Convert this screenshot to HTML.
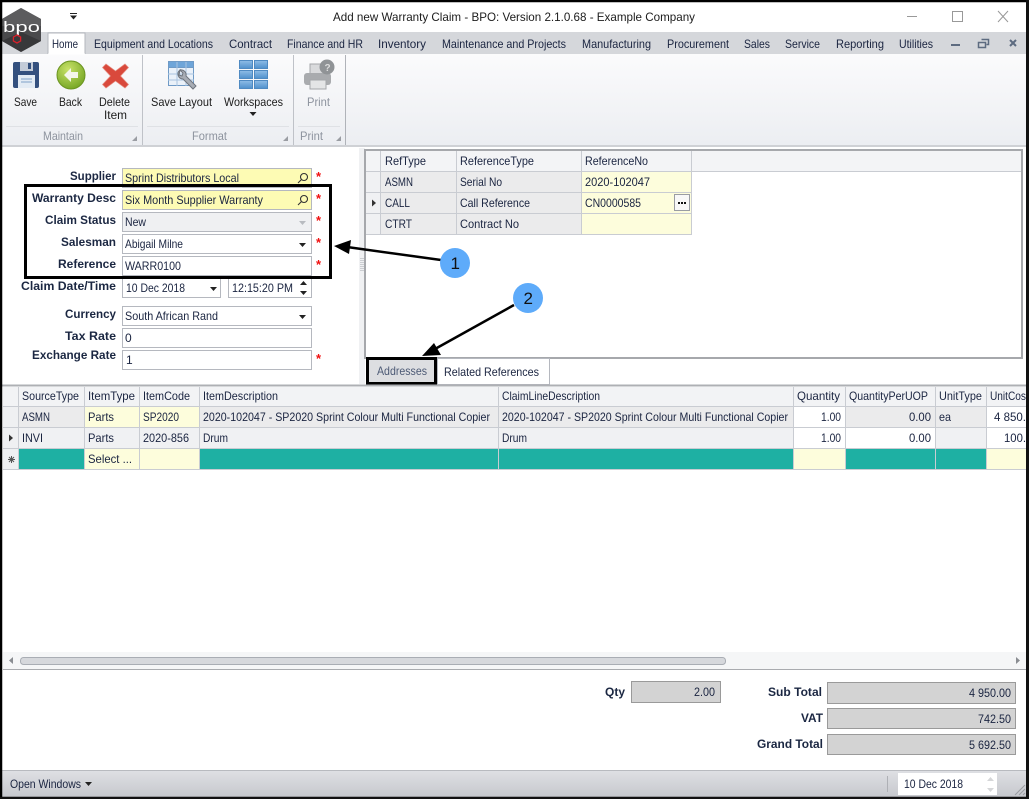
<!DOCTYPE html>
<html><head><meta charset="utf-8"><title>Add new Warranty Claim</title>
<style>
html,body{margin:0;padding:0;background:#fff;width:1029px;height:799px;overflow:hidden}
svg{display:block}
text{font-family:"Liberation Sans",sans-serif;font-size:12px;fill:#1a2440}
.b{font-weight:bold;fill:#1b2742}
.g{fill:#8d939e}
.d{fill:#1c1c1c}
.f{fill:#fff;stroke:#b5b8bf}
.y{fill:#fdfbb4;stroke:#b5b8bf}
.r{fill:#f01010;font-weight:bold;font-size:13px}
</style></head><body>
<svg width="1029" height="799" viewBox="0 0 1029 799" xmlns="http://www.w3.org/2000/svg">
<defs>
<linearGradient id="rib" x1="0" y1="0" x2="0" y2="1"><stop offset="0" stop-color="#fbfbfc"/><stop offset="1" stop-color="#eceef2"/></linearGradient>
<linearGradient id="st" x1="0" y1="0" x2="0" y2="1"><stop offset="0" stop-color="#dfe0e4"/><stop offset="1" stop-color="#c6c8cd"/></linearGradient>
<linearGradient id="blue" x1="0" y1="0" x2="0" y2="1"><stop offset="0" stop-color="#8fbde6"/><stop offset="1" stop-color="#4f90cc"/></linearGradient>
<radialGradient id="green" cx=".4" cy=".3" r=".8"><stop offset="0" stop-color="#c8e268"/><stop offset="1" stop-color="#6ea01e"/></radialGradient>
</defs>
<rect width="1029" height="799" fill="#fff"/>

<!-- title bar -->
<text x="333" y="21" textLength="362" lengthAdjust="spacingAndGlyphs" class="d">Add new Warranty Claim - BPO: Version 2.1.0.68 - Example Company</text>
<path d="M907 16.500h10" stroke="#999" fill="none"/>
<rect x="952.500" y="11.500" width="10" height="10" fill="none" stroke="#999"/>
<path d="M998 11l10 11M1008 11l-10 11" stroke="#999" fill="none"/>
<path d="M70 13h7v1h-7zM70 15.500h7l-3.500 4z" fill="#222"/>

<!-- tab strip -->
<rect x="2" y="32" width="1024" height="22" fill="#d5d7db"/>
<path d="M48 54V33h37v21z" fill="#fff" stroke="#b4b7bd"/>
<g>
<text x="52" y="48" textLength="26" lengthAdjust="spacingAndGlyphs">Home</text>
<text x="94" y="48" textLength="119" lengthAdjust="spacingAndGlyphs">Equipment and Locations</text>
<text x="229" y="48" textLength="43" lengthAdjust="spacingAndGlyphs">Contract</text>
<text x="287" y="48" textLength="76" lengthAdjust="spacingAndGlyphs">Finance and HR</text>
<text x="378" y="48" textLength="48" lengthAdjust="spacingAndGlyphs">Inventory</text>
<text x="442" y="48" textLength="124" lengthAdjust="spacingAndGlyphs">Maintenance and Projects</text>
<text x="582" y="48" textLength="69" lengthAdjust="spacingAndGlyphs">Manufacturing</text>
<text x="667" y="48" textLength="62" lengthAdjust="spacingAndGlyphs">Procurement</text>
<text x="744" y="48" textLength="26" lengthAdjust="spacingAndGlyphs">Sales</text>
<text x="785" y="48" textLength="35" lengthAdjust="spacingAndGlyphs">Service</text>
<text x="836" y="48" textLength="48" lengthAdjust="spacingAndGlyphs">Reporting</text>
<text x="899" y="48" textLength="34" lengthAdjust="spacingAndGlyphs">Utilities</text>
</g>
<path d="M951 44h9v2h-9z" fill="#5d6b80"/>
<path d="M981.500 39.500h7v5h-2M978.500 42.500h7v5h-7z" fill="none" stroke="#5d6b80" stroke-width="1.500"/>
<path d="M1010 40l6 6M1016 40l-6 6" stroke="#5d6b80" stroke-width="2"/>

<!-- ribbon -->
<rect x="2" y="54" width="1024" height="91" fill="url(#rib)"/>
<rect x="2" y="145" width="1024" height="2" fill="#cfd1d5"/>
<path d="M48 54h37" stroke="#fff"/>
<path d="M142.500 55v90M293.500 55v90" stroke="#bfc2c8"/>
<path d="M345.500 55v90" stroke="#b0b3b9"/>
<path d="M6 126.500h132M147 126.500h142M298 126.500h42" stroke="#dfe1e5"/>
<path d="M137 136v5h-5zM288 136v5h-5zM341 136v5h-5z" fill="#9a9da3"/>

<!-- logo -->
<path d="M21 8L41 19V41L21 52L2 41V19Z" fill="#4a4a4c"/>
<path d="M21 8L41 19V26H2V19Z" fill="#5c5c5e"/>
<path d="M21 32L41 41L21 52L2 41Z" fill="#38383a"/>
<text x="3" y="32" textLength="37" lengthAdjust="spacingAndGlyphs" style="font-size:15px;fill:#fff">bpo</text>
<path d="M17 35l3.600 2v4l-3.600 2-3.600-2v-4z" fill="none" stroke="#d8202a" stroke-width="1.300"/>

<!-- Save -->
<rect x="13" y="62" width="26" height="26" rx="2" fill="#34507e"/>
<rect x="20" y="62" width="13" height="9" fill="#c4ccd8"/><rect x="28" y="63" width="3" height="6" fill="#34507e"/>
<rect x="18" y="75" width="17" height="13" fill="#e3ebf4"/><path d="M21 79h11M21 82h11" stroke="#7fa2c8"/>
<!-- Back -->
<circle cx="71" cy="75" r="14" fill="url(#green)" stroke="#6b9420"/>
<path d="M64 75l7-7v4h7v6h-7v4z" fill="#f4f6ea"/>
<!-- Delete -->
<path d="M106 64l9.500 7 9.500-7 3.500 3.500-8 8.500 8 8.500-3.500 3.500-9.500-7-9.500 7-3.500-3.500 8-8.500-8-8.500z" fill="#d9493c" stroke="#e58b7f" stroke-width=".7"/>
<!-- Save layout -->
<rect x="168.500" y="61.500" width="25" height="24" fill="#eaf1f9" stroke="#6f9ac6"/>
<rect x="168.500" y="61.500" width="25" height="6" fill="#6ea5d9" stroke="#6f9ac6"/>
<path d="M168 74h26M168 80h26M177 62v24M186 62v24" stroke="#a9c4e0"/>
<path d="M180 70a5 5 0 0 0 3 9l10 10 3-3-10-10a5 5 0 0 0-6-6l3 3-1 3-3-1z" fill="#a8adb5" stroke="#6e747d"/>
<!-- Workspaces -->
<g fill="url(#blue)" stroke="#4f8ac2">
<rect x="239.500" y="60.500" width="13" height="8"/><rect x="254.500" y="60.500" width="13" height="8"/>
<rect x="239.500" y="70.500" width="13" height="8"/><rect x="254.500" y="70.500" width="13" height="8"/>
<rect x="239.500" y="80.500" width="13" height="8"/><rect x="254.500" y="80.500" width="13" height="8"/>
</g>
<!-- Print -->
<rect x="310" y="64" width="17" height="10" fill="#d9dadc" stroke="#a5a7aa"/>
<rect x="304" y="73" width="27" height="12" rx="3" fill="#a9abae"/>
<rect x="310" y="80" width="16" height="9" fill="#e4e5e6" stroke="#a5a7aa"/>
<circle cx="327" cy="67" r="7.500" fill="#909396"/>
<text x="324.500" y="71" style="font-size:10px;font-weight:bold;fill:#dcdcdc">?</text>

<g>
<text x="14" y="106" textLength="23" lengthAdjust="spacingAndGlyphs" class="d">Save</text>
<text x="59" y="106" textLength="23" lengthAdjust="spacingAndGlyphs" class="d">Back</text>
<text x="99" y="106" textLength="31" lengthAdjust="spacingAndGlyphs" class="d">Delete</text>
<text x="104" y="119" textLength="23" lengthAdjust="spacingAndGlyphs" class="d">Item</text>
<text x="151" y="106" textLength="61" lengthAdjust="spacingAndGlyphs" class="d">Save Layout</text>
<text x="224" y="106" textLength="59" lengthAdjust="spacingAndGlyphs" class="d">Workspaces</text>
<text x="307" y="106" textLength="23" lengthAdjust="spacingAndGlyphs" class="g">Print</text>
<text x="43" y="140" textLength="40" lengthAdjust="spacingAndGlyphs" class="g">Maintain</text>
<text x="192" y="140" textLength="35" lengthAdjust="spacingAndGlyphs" class="g">Format</text>
<text x="300" y="140" textLength="23" lengthAdjust="spacingAndGlyphs" class="g">Print</text>
</g>
<path d="M249.500 112h7l-3.500 4z" fill="#222"/>

<!-- form fields -->
<rect class="y" x="122.500" y="168.500" width="189" height="19"/>
<rect class="y" x="122.500" y="190.500" width="189" height="19"/>
<rect x="122.500" y="212.500" width="189" height="19" fill="#eff0f2" stroke="#b5b8bf"/>
<rect class="f" x="122.500" y="234.500" width="189" height="19"/>
<rect class="f" x="122.500" y="256.500" width="189" height="19"/>
<rect class="f" x="122.500" y="278.500" width="98" height="19"/>
<rect class="f" x="228.500" y="278.500" width="83" height="19"/>
<rect class="f" x="122.500" y="306.500" width="189" height="19"/>
<rect class="f" x="122.500" y="328.500" width="189" height="19"/>
<rect class="f" x="122.500" y="350.500" width="189" height="19"/>

<g>
<text class="b" x="70" y="180" textLength="46" lengthAdjust="spacingAndGlyphs">Supplier</text>
<text class="b" x="32" y="202" textLength="84" lengthAdjust="spacingAndGlyphs">Warranty Desc</text>
<text class="b" x="45" y="224" textLength="71" lengthAdjust="spacingAndGlyphs">Claim Status</text>
<text class="b" x="61" y="246" textLength="55" lengthAdjust="spacingAndGlyphs">Salesman</text>
<text class="b" x="58" y="268" textLength="58" lengthAdjust="spacingAndGlyphs">Reference</text>
<text class="b" x="21" y="290" textLength="95" lengthAdjust="spacingAndGlyphs">Claim Date/Time</text>
<text class="b" x="65" y="318" textLength="51" lengthAdjust="spacingAndGlyphs">Currency</text>
<text class="b" x="65" y="340" textLength="51" lengthAdjust="spacingAndGlyphs">Tax Rate</text>
<text class="b" x="32" y="359" textLength="84" lengthAdjust="spacingAndGlyphs">Exchange Rate</text>

<text x="125" y="182" textLength="114" lengthAdjust="spacingAndGlyphs">Sprint Distributors Local</text>
<text x="125" y="204" textLength="138" lengthAdjust="spacingAndGlyphs">Six Month Supplier Warranty</text>
<text x="125" y="226" textLength="21" lengthAdjust="spacingAndGlyphs">New</text>
<text x="125" y="248" textLength="58" lengthAdjust="spacingAndGlyphs">Abigail Milne</text>
<text x="125" y="270" textLength="56" lengthAdjust="spacingAndGlyphs">WARR0100</text>
<text x="126" y="292" textLength="59" lengthAdjust="spacingAndGlyphs">10 Dec 2018</text>
<text x="232" y="292" textLength="61" lengthAdjust="spacingAndGlyphs">12:15:20 PM</text>
<text x="125" y="320" textLength="93" lengthAdjust="spacingAndGlyphs">South African Rand</text>
<text x="125" y="342">0</text>
<text x="126" y="364">1</text>
</g>
<g fill="none" stroke="#333" stroke-width="1.100">
<circle cx="304" cy="177" r="3.500"/><path d="M301.500 179.500l-3.500 3.500"/>
<circle cx="304" cy="199" r="3.500"/><path d="M301.500 201.500l-3.500 3.500"/>
</g>
<path d="M299 221h7l-3.500 4z" fill="#b8bbc0"/>
<path d="M299 243h7l-3.500 4zM299 315h7l-3.500 4zM210 287h7l-3.500 4z" fill="#222"/>
<path d="M300 285l3.500-4 3.500 4zM300 291h7l-3.500 4z" fill="#222"/>
<text class="r" x="316" y="181">*</text>
<text class="r" x="316" y="203">*</text>
<text class="r" x="316" y="225">*</text>
<text class="r" x="316" y="247">*</text>
<text class="r" x="316" y="269">*</text>
<text class="r" x="316" y="363">*</text>
<rect x="25.500" y="185.500" width="305" height="92" fill="none" stroke="#000" stroke-width="3"/>

<!-- splitter -->
<rect x="359" y="148" width="6" height="236" fill="#f0f1f3"/>
<path d="M361 258v14M363 258v14" stroke="#a8abb0" stroke-dasharray="1 1"/>

<!-- ref grid -->
<rect x="365" y="150" width="657" height="208" fill="#fff" stroke="#a6a8ac" stroke-width="2"/>
<rect x="366" y="151" width="655" height="20" fill="#f3f4f6"/>
<path d="M366 171.500h655" stroke="#c9ccd2"/>
<rect x="366" y="172" width="14" height="62" fill="#f0f1f3"/>
<rect x="381" y="172" width="200" height="62" fill="#ebebec"/>
<rect x="582" y="172" width="109" height="62" fill="#fdfddc"/>
<path d="M366 192.500h325M366 213.500h325M366 234.500h325M380.500 151v84M456.500 151v84M581.500 151v84M691.500 151v84" stroke="#c9ccd2"/>
<g>
<text x="385" y="165" textLength="41" lengthAdjust="spacingAndGlyphs">RefType</text>
<text x="460" y="165" textLength="74" lengthAdjust="spacingAndGlyphs">ReferenceType</text>
<text x="585" y="165" textLength="63" lengthAdjust="spacingAndGlyphs">ReferenceNo</text>
<text x="385" y="186" textLength="28" lengthAdjust="spacingAndGlyphs">ASMN</text>
<text x="460" y="186" textLength="42" lengthAdjust="spacingAndGlyphs">Serial No</text>
<text x="585" y="186" textLength="65" lengthAdjust="spacingAndGlyphs">2020-102047</text>
<text x="385" y="207" textLength="25" lengthAdjust="spacingAndGlyphs">CALL</text>
<text x="460" y="207" textLength="70" lengthAdjust="spacingAndGlyphs">Call Reference</text>
<text x="585" y="207" textLength="56" lengthAdjust="spacingAndGlyphs">CN0000585</text>
<text x="385" y="228" textLength="27" lengthAdjust="spacingAndGlyphs">CTRT</text>
<text x="460" y="228" textLength="59" lengthAdjust="spacingAndGlyphs">Contract No</text>
</g>
<path d="M372 199.500l4 3.500-4 3.500z" fill="#333"/>
<rect x="674.500" y="194.500" width="15" height="16" fill="#f8f8f8" stroke="#9a9da3"/>
<path d="M678 203h2M681 203h2M684 203h2" stroke="#111" stroke-width="2"/>

<!-- tabs -->
<rect x="437.500" y="358.500" width="112" height="26" fill="#fff" stroke="#b5b8bf"/>
<rect x="367.500" y="358.500" width="68" height="25" fill="#dddee1" stroke="#000" stroke-width="3"/>
<text x="377" y="375" textLength="50" lengthAdjust="spacingAndGlyphs" style="fill:#4d5a75">Addresses</text>
<text x="444" y="376" textLength="95" lengthAdjust="spacingAndGlyphs">Related References</text>

<!-- arrows and callouts -->
<path d="M441 260L347 247" stroke="#000" stroke-width="2.500" fill="none"/>
<path d="M334 246L351 240L349 254Z" fill="#000"/>
<path d="M514 305L435 349" stroke="#000" stroke-width="2.500" fill="none"/>
<path d="M422 356L434 343L441 355Z" fill="#000"/>
<circle cx="455" cy="263" r="15" fill="#5eabfa"/>
<circle cx="528" cy="298" r="15" fill="#5eabfa"/>
<text x="450.500" y="269" style="font-size:17px;fill:#111">1</text>
<text x="523.500" y="304" style="font-size:17px;fill:#111">2</text>

<!-- lines grid -->
<path d="M2 385.500h1024" stroke="#aeb0b4" stroke-width="2"/>
<rect x="3" y="387" width="1023" height="19" fill="#f2f3f5"/>
<rect x="3" y="407" width="16" height="62" fill="#eff0f2"/>
<rect x="19" y="407" width="66" height="20" fill="#ebebec"/>
<rect x="85" y="407" width="114" height="20" fill="#fdfddc"/>
<rect x="200" y="407" width="594" height="20" fill="#ebebec"/>
<rect x="846" y="407" width="140" height="20" fill="#ebebec"/>
<rect x="19" y="428" width="180" height="20" fill="#f0f1f3"/>
<rect x="200" y="428" width="594" height="20" fill="#f0f1f3"/>
<rect x="936" y="428" width="50" height="20" fill="#f0f1f3"/>
<rect x="19" y="449" width="1007" height="20" fill="#1eb0a3"/>
<rect x="85" y="449" width="114" height="20" fill="#fdfddc"/>
<rect x="794" y="449" width="51" height="20" fill="#fdfddc"/>
<rect x="987" y="449" width="39" height="20" fill="#fdfddc"/>
<rect x="987" y="407" width="39" height="20" fill="#fff"/>
<path d="M3 406.500h1023M3 427.500h1023M3 448.500h1023M3 469.500h1023" stroke="#c9ccd2"/>
<path d="M18.500 387v83M84.500 387v83M139.500 387v83M199.500 387v83M498.500 387v83M793.500 387v83M845.500 387v83M935.500 387v83M986.500 387v83" stroke="#c9ccd2"/>
<g>
<text x="22" y="400" textLength="57" lengthAdjust="spacingAndGlyphs">SourceType</text>
<text x="88" y="400" textLength="47" lengthAdjust="spacingAndGlyphs">ItemType</text>
<text x="143" y="400" textLength="47" lengthAdjust="spacingAndGlyphs">ItemCode</text>
<text x="203" y="400" textLength="75" lengthAdjust="spacingAndGlyphs">ItemDescription</text>
<text x="502" y="400" textLength="98" lengthAdjust="spacingAndGlyphs">ClaimLineDescription</text>
<text x="797" y="400" textLength="43" lengthAdjust="spacingAndGlyphs">Quantity</text>
<text x="849" y="400" textLength="79" lengthAdjust="spacingAndGlyphs">QuantityPerUOP</text>
<text x="939" y="400" textLength="43" lengthAdjust="spacingAndGlyphs">UnitType</text>
<text x="990" y="400" textLength="36" lengthAdjust="spacingAndGlyphs">UnitCos</text>

<text x="22" y="421" textLength="28" lengthAdjust="spacingAndGlyphs">ASMN</text>
<text x="88" y="421" textLength="26" lengthAdjust="spacingAndGlyphs">Parts</text>
<text x="143" y="421" textLength="36" lengthAdjust="spacingAndGlyphs">SP2020</text>
<text x="203" y="421" textLength="287" lengthAdjust="spacingAndGlyphs">2020-102047 - SP2020 Sprint Colour Multi Functional Copier</text>
<text x="502" y="421" textLength="286" lengthAdjust="spacingAndGlyphs">2020-102047 - SP2020 Sprint Colour Multi Functional Copier</text>
<text x="821" y="421" textLength="20" lengthAdjust="spacingAndGlyphs">1.00</text>
<text x="909" y="421" textLength="22" lengthAdjust="spacingAndGlyphs">0.00</text>
<text x="939" y="421" textLength="12" lengthAdjust="spacingAndGlyphs">ea</text>
<text x="994" y="421" textLength="32" lengthAdjust="spacingAndGlyphs">4 850.</text>

<text x="22" y="442" textLength="21" lengthAdjust="spacingAndGlyphs">INVI</text>
<text x="88" y="442" textLength="26" lengthAdjust="spacingAndGlyphs">Parts</text>
<text x="143" y="442" textLength="46" lengthAdjust="spacingAndGlyphs">2020-856</text>
<text x="203" y="442" textLength="25" lengthAdjust="spacingAndGlyphs">Drum</text>
<text x="502" y="442" textLength="25" lengthAdjust="spacingAndGlyphs">Drum</text>
<text x="821" y="442" textLength="20" lengthAdjust="spacingAndGlyphs">1.00</text>
<text x="909" y="442" textLength="22" lengthAdjust="spacingAndGlyphs">0.00</text>
<text x="1004" y="442" textLength="22" lengthAdjust="spacingAndGlyphs">100.</text>
<text x="88" y="463" textLength="44" lengthAdjust="spacingAndGlyphs">Select ...</text>
</g>
<path d="M9 434.500l4 3.500-4 3.500z" fill="#333"/>
<path d="M8 459.500h7M11.500 456v7M9 457l5 5M14 457l-5 5" stroke="#555"/>

<!-- scrollbar -->
<rect x="3" y="652" width="1023" height="17" fill="#f5f6f7"/>
<path d="M3 669.500h1023" stroke="#a9abaf"/>
<rect x="20.500" y="657.500" width="705" height="7" rx="3" fill="#d6d8dc" stroke="#a9adb4"/>
<path d="M13 657v7l-4-3.500zM1016 657v7l4-3.500z" fill="#8a8d92"/>

<!-- totals -->
<g>
<text class="b" x="605" y="696" textLength="20" lengthAdjust="spacingAndGlyphs">Qty</text>
<text class="b" x="768" y="696" textLength="54" lengthAdjust="spacingAndGlyphs">Sub Total</text>
<text class="b" x="801" y="722" textLength="22" lengthAdjust="spacingAndGlyphs">VAT</text>
<text class="b" x="757" y="748" textLength="66" lengthAdjust="spacingAndGlyphs">Grand Total</text>
</g>
<rect x="631.500" y="681.500" width="89" height="21" fill="#d3d3d3" stroke="#9a9a9a"/>
<rect x="827.500" y="682.500" width="188" height="21" fill="#d3d3d3" stroke="#9a9a9a"/>
<rect x="827.500" y="708.500" width="188" height="20" fill="#d3d3d3" stroke="#9a9a9a"/>
<rect x="827.500" y="734.500" width="188" height="20" fill="#d3d3d3" stroke="#9a9a9a"/>
<text x="694" y="696" textLength="21" lengthAdjust="spacingAndGlyphs">2.00</text>
<text x="969" y="697" textLength="42" lengthAdjust="spacingAndGlyphs">4 950.00</text>
<text x="978" y="723" textLength="33" lengthAdjust="spacingAndGlyphs">742.50</text>
<text x="969" y="749" textLength="42" lengthAdjust="spacingAndGlyphs">5 692.50</text>

<!-- status bar -->
<rect x="2" y="770" width="1024" height="27" fill="url(#st)"/>
<path d="M2 770.500h1024" stroke="#b8babf"/>
<text x="10" y="788" textLength="71" lengthAdjust="spacingAndGlyphs">Open Windows</text>
<path d="M85 782h7l-3.500 4z" fill="#222"/>
<path d="M887.500 776v16" stroke="#aeb0b5"/>
<rect x="898" y="773" width="99" height="22" fill="#fff"/>
<text x="904" y="788" textLength="59" lengthAdjust="spacingAndGlyphs">10 Dec 2018</text>
<path d="M987 781l3.500-4 3.500 4zM987 788h7l-3.500 4z" fill="#d5d6d8"/>
<path d="M1015 795l10-10M1019 795l6-6M1023 795l2-2" stroke="#9a9ca1"/>

<!-- window frame -->
<path d="M1 1H1027.500V798H1Z" fill="none" stroke="#000" stroke-width="2.500"/>
<rect x="1026" y="0" width="3" height="799" fill="#111"/>
<rect x="0" y="797" width="1029" height="2" fill="#111"/>
</svg>
</body></html>
